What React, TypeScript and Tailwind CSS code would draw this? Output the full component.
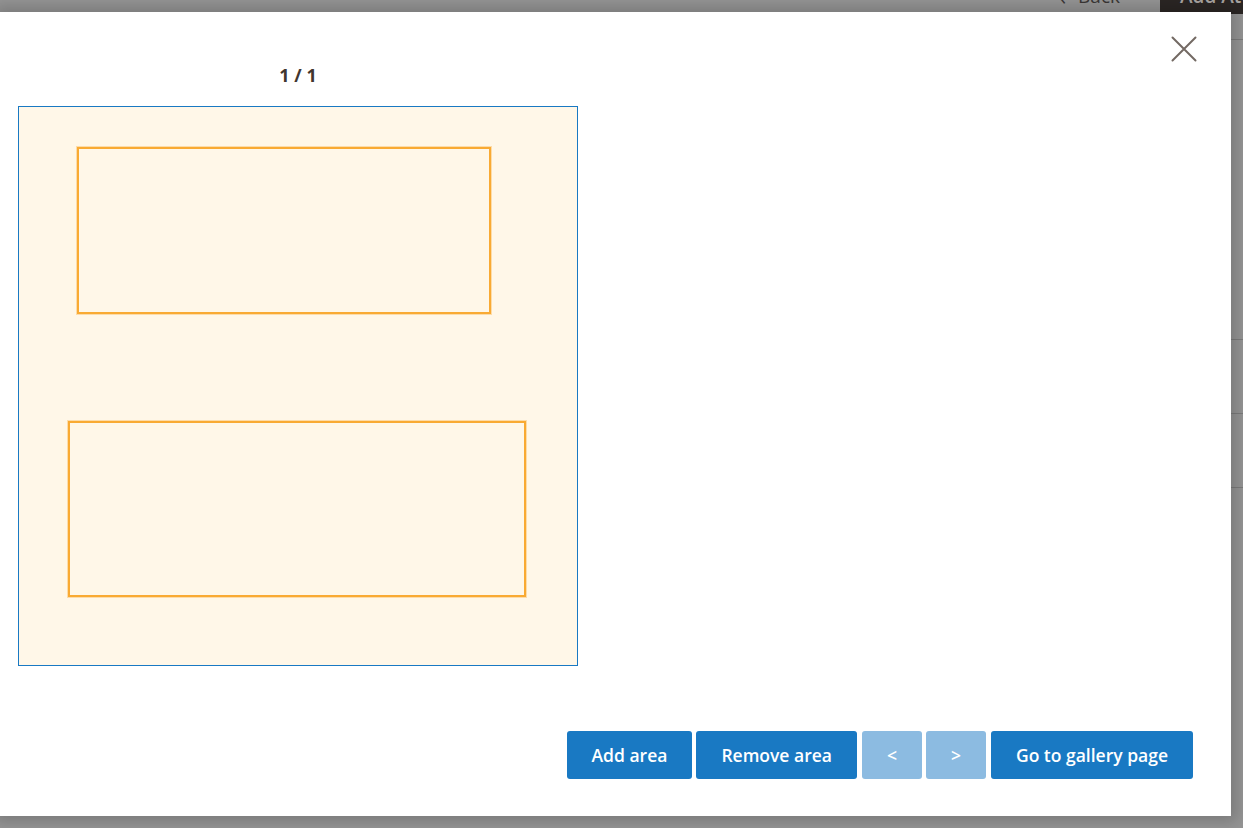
type Area = { id: number; left: number; top: number; width: number; height: number };

const areas: Area[] = [
    { id: 1, left: 58, top: 40, width: 414, height: 167 },
    { id: 2, left: 49, top: 314, width: 458, height: 176 },
];

function PageBehind() {
    return <>
        <div className="flex h-[36px] -mt-[22px] items-center justify-end text-[19px] text-[#3b3735]">
            <div className="flex items-center gap-3 pr-10">
                <span className="text-[22px] leading-none">‹</span>
                <span>Back</span>
            </div>
            <div className="flex h-full w-[83px] items-center overflow-hidden bg-[#2b2624] pl-5 text-[#a9a5a2] whitespace-nowrap font-semibold">
                Add Attribute
            </div>
        </div>
        <div className="h-[26px] border-b border-[#7c7c7c]" />
        <div className="h-[300px] border-b border-[#7c7c7c]" />
        <div className="h-[74px] border-b border-[#7c7c7c]" />
        <div className="h-[74px] border-b border-[#7c7c7c]" />
    </>
}

export default function App() {
    return <>
        <div className="relative h-[828px] w-full overflow-hidden bg-[#959595] font-['Open_Sans',sans-serif]">
            <PageBehind />

            <div className="absolute left-0 top-[12px] flex h-[804px] w-[1231px] flex-col bg-white shadow-[0_0_14px_6px_rgba(0,0,0,0.18)]">
                <button className="absolute right-[34px] top-[24px]">
                    <svg width="26" height="26" viewBox="0 0 26 26" fill="none" stroke="#736963" strokeWidth="2" strokeLinecap="round">
                        <path d="M1.5 1.5 L24.5 24.5 M24.5 1.5 L1.5 24.5" />
                    </svg>
                </button>

                <div className="ml-[18px] mt-[51px] flex w-[560px] flex-col">
                    <p className="text-center text-[18px] font-bold leading-[24px] text-[#41362f]">1 / 1</p>
                    <div className="relative mt-[19px] h-[560px] w-[560px] border border-[#1979c3] bg-[#fff7e8]">
                        {areas.map((area) => (
                            <div key={area.id}
                                className="absolute border-2 border-[#f9aa33] shadow-[0_0_0_1px_rgba(249,170,51,0.35)]"
                                style={{ left: area.left, top: area.top, width: area.width, height: area.height }} />
                        ))}
                    </div>
                </div>

                <div className="mt-[65px] flex justify-end gap-[4px] pr-[38px] text-[17.5px] font-semibold text-white">
                    <button className="h-[48px] rounded-[3px] bg-[#1979c3] px-[25px]">Add area</button>
                    <button className="h-[48px] rounded-[3px] bg-[#1979c3] px-[25px]">Remove area</button>
                    <button disabled className="ml-[1px] h-[48px] w-[60px] rounded-[3px] bg-[#8cbbe1]">&lt;</button>
                    <button disabled className="h-[48px] w-[60px] rounded-[3px] bg-[#8cbbe1]">&gt;</button>
                    <button className="ml-[1px] h-[48px] rounded-[3px] bg-[#1979c3] px-[25px]">Go to gallery page</button>
                </div>
            </div>
        </div>
    </>
}
